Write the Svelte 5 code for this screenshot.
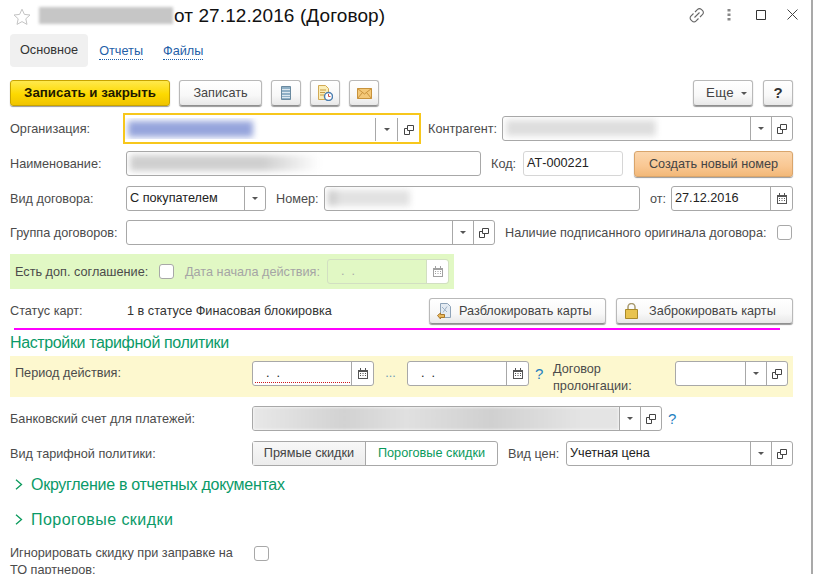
<script>
  // small helpers for the 1C style form
</script>

{#snippet arrow()}
  <span class="btn-cell"><svg width="6" height="3" viewBox="0 0 6 3"><path d="M0 0h6L3 3z" fill="#555" /></svg></span>
{/snippet}
{#snippet open()}
  <span class="btn-cell">
    <svg width="10" height="10" viewBox="0 0 10 10" fill="none" stroke="#444">
      <path d="M3.500 .5h6v5h-6z" /><path d="M3.500 3.500H.5v6h5V5.500" />
    </svg>
  </span>
{/snippet}
{#snippet cal(dim)}
  <span class="btn-cell cal" class:dim>
    <svg width="10" height="11" viewBox="0 0 10 11">
      <path d="M0 2h10v9H0z" fill="#555" />
      <path d="M1 4h8v6H1z" fill="#fff" />
      <path d="M2 0h1v3H2zM7 0h1v3H7z" fill="#555" />
      <path d="M2 5h1v1H2zM4.500 5h1v1h-1zM7 5h1v1H7zM2 7h1v1H2zM4.500 7h1v1h-1zM7 7h1v1H7z" fill="#555" />
    </svg>
  </span>
{/snippet}

<div class="win">
  <header class="title">
    <svg class="star" width="18" height="17" viewBox="0 0 18 17" fill="none" stroke="#c4c4c4">
      <path d="M9 1.200l2.400 5.200 5.600.6-4.200 3.800 1.200 5.600L9 13.600l-5 2.800 1.200-5.600L1 7l5.600-.6z" />
    </svg>
    <div class="blur-title"></div>
    <h1>от 27.12.2016 (Договор)</h1>
    <div class="win-tools">
      <svg class="t-link" width="16" height="16" viewBox="0 0 16 16" fill="none" stroke="#666" stroke-width="1.100">
        <path d="M6.500 4.500l2.600-2.600a2.600 2.600 0 0 1 3.700 0l1.300 1.300a2.600 2.600 0 0 1 0 3.700L11.500 9.500" transform="translate(-.5 .5)" />
        <path d="M9.500 11.500l-2.600 2.600a2.600 2.600 0 0 1-3.700 0L1.900 12.800a2.600 2.600 0 0 1 0-3.700L4.500 6.500" />
        <path d="M5.500 10.500l5-5" />
      </svg>
      <svg class="t-dots" width="4" height="12" viewBox="0 0 4 12"><path d="M.5 0h3v2.500h-3zM.5 4.500h3V7h-3zM.5 9h3v2.500h-3z" fill="#888" /></svg>
      <svg class="t-max" width="10" height="10" viewBox="0 0 10 10" fill="none" stroke="#333"><path d="M.5 .5h9v9h-9z" /></svg>
      <svg class="t-close" width="11" height="11" viewBox="0 0 11 11" fill="none" stroke="#444"><path d="M.5 .5l10 10M10.500 .5l-10 10" /></svg>
    </div>
  </header>

  <nav class="tabs">
    <span class="tab active">Основное</span>
    <span class="tab">Отчеты</span>
    <span class="tab">Файлы</span>
  </nav>

  <div class="toolbar">
    <button class="b primary">Записать и закрыть</button>
    <button class="b save">Записать</button>
    <button class="b ico">
      <svg width="10" height="14" viewBox="0 0 10 14">
        <path d="M.5 .5h9v13h-9z" fill="#8fb0c6" stroke="#6a8aa0" />
        <path d="M1 3.500h8M1 6.500h8M1 9.500h8M1 11.500h8" stroke="#dce8f0" />
      </svg>
    </button>
    <button class="b ico">
      <svg width="16" height="16" viewBox="0 0 16 16">
        <path d="M1.500 .5h7l3 3v11h-10z" fill="#fbeeb8" stroke="#d2aa55" />
        <path d="M3 5h6M3 7.500h5M3 10h4" stroke="#c59a45" />
        <circle cx="11.500" cy="11.500" r="4" fill="#fff" stroke="#4d7fb0" stroke-width="1.500" />
        <path d="M11.500 9v2.500h2" stroke="#c8504a" fill="none" />
      </svg>
    </button>
    <button class="b ico">
      <svg width="15" height="11" viewBox="0 0 15 11">
        <path d="M.5 .5h14v10H.5z" fill="#f3c878" stroke="#c8933c" />
        <path d="M.5 .5l7 5.500 7-5.500M.5 10.500l5-6M14.500 10.500l-5-6" fill="none" stroke="#c8933c" />
      </svg>
    </button>
    <span class="spacer"></span>
    <button class="b more">Еще <svg width="6" height="3" viewBox="0 0 6 3"><path d="M0 0h6L3 3z" fill="#555" /></svg></button>
    <button class="b help">?</button>
  </div>

  <div class="row r-org">
    <span class="lab l-org">Организация:</span>
    <div class="focus">
      <div class="val"><div class="smear s-org"></div></div>
      {@render arrow()}
      {@render open()}
    </div>
    <span class="lab l-contr">Контрагент:</span>
    <div class="f f-contr">
      <div class="val"><div class="smear s-contr"></div></div>
      {@render arrow()}
      {@render open()}
    </div>
  </div>

  <div class="row r-name">
    <span class="lab l-main">Наименование:</span>
    <div class="f f-name"><div class="val"><div class="smear s-name"></div></div></div>
    <span class="lab l-code">Код:</span>
    <div class="f f-code"><div class="val">АТ-000221</div></div>
    <button class="b orange">Создать новый номер</button>
  </div>

  <div class="row r-std">
    <span class="lab l-main">Вид договора:</span>
    <div class="f f-kind">
      <div class="val">С покупателем</div>
      {@render arrow()}
    </div>
    <span class="lab l-num">Номер:</span>
    <div class="f f-num"><div class="val"><div class="smear s-num"></div></div></div>
    <span class="lab l-from">от:</span>
    <div class="f f-date">
      <div class="val">27.12.2016</div>
      {@render cal(false)}
    </div>
  </div>

  <div class="row r-std">
    <span class="lab l-main">Группа договоров:</span>
    <div class="f f-group">
      <div class="val"></div>
      {@render arrow()}
      {@render open()}
    </div>
    <span class="lab l-orig">Наличие подписанного оригинала договора:</span>
    <span class="chk"></span>
  </div>

  <div class="green">
    <span class="lab l-extra">Есть доп. соглашение:</span>
    <span class="chk c-extra"></span>
    <span class="lab gray">Дата начала действия:</span>
    <div class="f f-date off">
      <div class="val mask">. &nbsp;.</div>
      {@render cal(true)}
    </div>
  </div>

  <div class="row r-status">
    <span class="lab l-main">Статус карт:</span>
    <span class="status">1 в статусе Финасовая блокировка</span>
    <button class="b card c-unlock">
      <svg width="14" height="16" viewBox="0 0 14 16">
        <path d="M3.500 .5h7l3 3v11h-10z" fill="#e4ebf2" stroke="#8ea3b8" />
        <path d="M5 4l5 5M10 3.500l-4 6" stroke="#9fb2c6" />
        <path d="M.5 12.500l3-2.500v1.500h4v3h-4V16z" fill="#e9b95c" stroke="#a9772a" />
      </svg>
      Разблокировать карты
    </button>
    <button class="b card c-lock">
      <svg width="13" height="16" viewBox="0 0 13 16">
        <path d="M3 7V4a3.500 3.500 0 0 1 7 0v3" fill="none" stroke="#a89a70" stroke-width="1.500" />
        <path d="M.5 6.500h12v9H.5z" fill="#e8c34f" stroke="#a98a2a" />
      </svg>
      Заброкировать карты
    </button>
  </div>

  <div class="rule"></div>

  <h2 class="sect">Настройки тарифной политики</h2>

  <div class="yellow">
    <span class="lab l-period">Период действия:</span>
    <div class="f f-date">
      <div class="val mask req">. &nbsp;.</div>
      {@render cal(false)}
    </div>
    <span class="dots">...</span>
    <div class="f f-date">
      <div class="val mask">. &nbsp;.</div>
      {@render cal(false)}
    </div>
    <span class="q q-period">?</span>
    <span class="lab l-prol">Договор пролонгации:</span>
    <div class="f f-prol">
      <div class="val"></div>
      {@render arrow()}
      {@render open()}
    </div>
  </div>

  <div class="row r-bank">
    <span class="lab l-wide">Банковский счет для платежей:</span>
    <div class="f f-bank">
      <div class="val bare"><div class="smear s-bank"></div></div>
      {@render arrow()}
      {@render open()}
    </div>
    <span class="q q-bank">?</span>
  </div>

  <div class="row r-tarif">
    <span class="lab l-wide">Вид тарифной политики:</span>
    <div class="toggle">
      <span class="opt on">Прямые скидки</span>
      <span class="opt">Пороговые скидки</span>
    </div>
    <span class="lab l-price">Вид цен:</span>
    <div class="f f-price">
      <div class="val">Учетная цена</div>
      {@render arrow()}
      {@render open()}
    </div>
  </div>

  <div class="coll c-round">
    <svg width="8" height="11" viewBox="0 0 8 11" fill="none" stroke="#0a9a5c" stroke-width="1.300"><path d="M1 .8l5.500 4.700L1 10.200" /></svg>
    <span>Округление в отчетных документах</span>
  </div>
  <div class="coll c-thresh">
    <svg width="8" height="11" viewBox="0 0 8 11" fill="none" stroke="#0a9a5c" stroke-width="1.300"><path d="M1 .8l5.500 4.700L1 10.200" /></svg>
    <span>Пороговые скидки</span>
  </div>

  <div class="row r-ign">
    <span class="lab l-ign">Игнорировать скидку при заправке на ТО партнеров:</span>
    <span class="chk"></span>
  </div>
</div>

<style>
  :global(body) {
    margin: 0;
    background: #fff;
  }
  .win {
    box-sizing: border-box;
    width: 813px;
    height: 574px;
    overflow: hidden;
    border-right: 2px solid #a9a9a9;
    font: 12.7px/16px "Liberation Sans", Arial, sans-serif;
    color: #4b4b4b;
  }
  .title {
    display: flex;
    align-items: center;
    height: 32px;
    padding-left: 13px;
  }
  .star {
    flex: none;
  }
  .blur-title {
    width: 134px;
    height: 17px;
    margin: 0 1px 2px 8px;
    background: #c6c6c6;
    filter: blur(1.500px);
  }
  h1 {
    margin: 0;
    font-size: 19px;
    font-weight: 400;
    letter-spacing: 0.1px;
    color: #111;
  }
  .win-tools {
    display: flex;
    align-items: center;
    margin: 0 0 3px auto;
    padding-right: 13px;
  }
  .t-dots {
    margin-left: 22px;
  }
  .t-max {
    margin-left: 25px;
  }
  .t-close {
    margin-left: 21px;
  }
  .tabs {
    display: flex;
    height: 33px;
    margin: 2px 0 0 10px;
  }
  .tab {
    padding: 0 10px;
    line-height: 33px;
    color: #1f5fa8;
  }
  .tab + .tab {
    line-height: 16px;
    height: 16px;
    margin: 9px 20px 0 0;
    padding: 0;
    border-bottom: 1px dotted #1f5fa8;
  }
  .tab.active + .tab {
    margin-left: 11px;
  }
  .active {
    background: #f0f0f0;
    border-radius: 4px;
    color: #333;
  }
  .toolbar {
    display: flex;
    gap: 9px;
    margin: 13px 18px 0 10px;
  }
  .b {
    box-sizing: border-box;
    flex: none;
    height: 26px;
    padding: 0;
    font: inherit;
    color: #444;
    border: 1px solid #b9b9b9;
    border-bottom-color: #8f8f8f;
    border-radius: 3px;
    background: linear-gradient(#fff, #f8f8f8 60%, #e8e8e8);
    box-shadow: 0 1px 1px #999;
  }
  .primary {
    width: 160px;
    font-size: 13.300px;
    font-weight: 700;
    color: #1e1a00;
    border-color: #c8a400;
    background: linear-gradient(#ffe94d, #fdd900 55%, #f0c400);
  }
  .save {
    width: 83px;
  }
  .ico {
    display: flex;
    align-items: center;
    justify-content: center;
    width: 30px;
  }
  .spacer {
    flex: 1;
  }
  .more {
    width: 60px;
    margin-right: 1px;
    padding-left: 7px;
    font-size: 13.300px;
    letter-spacing: 0.3px;
  }
  .more svg {
    margin: 0 0 2px 3px;
  }
  .help {
    width: 30px;
    font-size: 15px;
    font-weight: 700;
    color: #333;
  }
  .row {
    display: flex;
    align-items: center;
    height: 25px;
    margin: 9px 20px 0 10px;
  }
  .r-org {
    height: 31px;
    margin-top: 7px;
  }
  .r-name {
    margin-top: 7px;
  }
  .r-std + .r-std {
    margin-top: 9px;
  }
  .r-name + .r-std {
    margin-top: 10px;
  }
  .r-status {
    height: 26px;
  }
  .r-tarif {
    margin-top: 10px;
  }
  .r-ign {
    align-items: flex-start;
    height: 40px;
    margin-top: 9px;
  }
  .lab {
    flex: none;
    white-space: nowrap;
  }
  .l-org {
    width: 113px;
  }
  .l-main {
    width: 116px;
  }
  .l-wide {
    width: 242px;
  }
  .l-contr {
    width: 74px;
    margin-left: 7px;
  }
  .l-code {
    width: 32px;
    margin-left: 10px;
  }
  .l-num {
    width: 48px;
    margin-left: 10px;
  }
  .l-from {
    width: 21px;
    margin-left: 10px;
  }
  .l-orig {
    width: 272px;
    margin-left: 10px;
  }
  .l-price {
    width: 58px;
    margin-left: 10px;
  }
  .f,
  .focus {
    box-sizing: border-box;
    display: flex;
    flex: none;
    height: 25px;
    background: #fff;
    border: 1px solid #a8a8a8;
    border-radius: 3px;
    color: #222;
  }
  .focus {
    width: 298px;
    height: 31px;
    padding: 3px 0;
    border: 2px solid #f7c71c;
    border-radius: 0;
  }
  .val {
    flex: 1;
    min-width: 0;
    padding-left: 3px;
    line-height: 23px;
    overflow: hidden;
  }
  .bare {
    padding-left: 0;
  }
  .btn-cell {
    box-sizing: border-box;
    display: flex;
    flex: none;
    align-items: center;
    justify-content: center;
    width: 21px;
    border-left: 1px solid #a8a8a8;
  }
  .focus .btn-cell {
    width: 22px;
    height: 23px;
  }
  .cal {
    width: 22px;
  }
  .dim svg {
    opacity: 0.55;
  }
  .f-contr {
    width: 291px;
  }
  .f-name {
    width: 355px;
  }
  .f-code {
    width: 100px;
    border-color: #d6d6d6;
  }
  .orange {
    width: 159px;
    margin-left: 11px;
    border-color: #d9a56c;
    background: linear-gradient(#fbd6ad, #f9c792 60%, #f2b878);
  }
  .f-kind {
    width: 140px;
  }
  .f-num {
    width: 316px;
  }
  .f-date {
    width: 122px;
  }
  .f-group {
    width: 369px;
  }
  .chk {
    box-sizing: border-box;
    flex: none;
    width: 15px;
    height: 15px;
    background: #fff;
    border: 1px solid #a8a8a8;
    border-radius: 3px;
  }
  .green {
    display: flex;
    align-items: center;
    box-sizing: border-box;
    width: 444px;
    height: 35px;
    margin: 9px 0 0 10px;
    padding-left: 5px;
    background: #e1f8c4;
  }
  .l-extra {
    width: 144px;
  }
  .c-extra {
    margin-right: 11px;
  }
  .gray {
    width: 142px;
    color: #a5a5a5;
  }
  .off {
    background: #e1f8c4;
    border-color: #d2dfc2;
    color: #aaa;
  }
  .off .btn-cell {
    background: #fff;
    border-color: #d2dfc2;
    border-radius: 0 3px 3px 0;
  }
  .mask {
    padding-left: 13px;
  }
  .status {
    width: 302px;
    flex: none;
    margin-left: 1px;
    color: #333;
  }
  .card {
    display: flex;
    align-items: center;
    width: 177px;
    padding-left: 7px;
  }
  .card svg {
    margin-right: 8px;
  }
  .c-lock {
    margin-left: 10px;
    padding-left: 8px;
  }
  .c-lock svg {
    margin-right: 11px;
  }
  .rule {
    width: 766px;
    height: 2px;
    margin: 4px 0 0 14px;
    background: #f0f;
  }
  .sect {
    height: 26px;
    margin: 0 0 0 10px;
    font-size: 16px;
    font-weight: 400;
    line-height: 26px;
    letter-spacing: -0.37px;
    color: #0a9a68;
  }
  .yellow {
    display: flex;
    align-items: flex-start;
    box-sizing: border-box;
    width: 783px;
    height: 41px;
    margin-left: 10px;
    padding: 5px 5px 0;
    background: #fdf8cf;
  }
  .l-period {
    width: 237px;
    line-height: 25px;
  }
  .dots {
    width: 33px;
    line-height: 25px;
    text-align: center;
    color: #6a9ab8;
  }
  .req {
    position: relative;
  }
  .req::after {
    content: "";
    position: absolute;
    left: 2px;
    right: 1px;
    bottom: 2px;
    border-bottom: 1px dotted #d01818;
  }
  .q {
    font-size: 15px;
    line-height: 25px;
    color: #1f7fc0;
  }
  .q-period {
    width: 18px;
    margin-left: 6px;
  }
  .q-bank {
    margin-left: 6px;
  }
  .l-prol {
    width: 122px;
    line-height: 17px;
    white-space: normal;
  }
  .f-prol {
    width: 113px;
  }
  .f-bank {
    width: 410px;
  }
  .toggle {
    box-sizing: border-box;
    display: flex;
    flex: none;
    width: 246px;
    height: 25px;
    border: 1px solid #a8a8a8;
    border-radius: 3px;
    line-height: 23px;
    text-align: center;
  }
  .opt {
    flex: 1;
    color: #0a9a5c;
  }
  .on {
    flex: none;
    width: 112px;
    color: #444;
    border-right: 1px solid #a8a8a8;
    background: linear-gradient(#f8f8f8, #ececec);
  }
  .f-price {
    width: 227px;
  }
  .coll {
    display: flex;
    align-items: center;
    height: 35px;
    margin-left: 15px;
    font-size: 16px;
    color: #0a9a68;
  }
  .coll svg {
    margin-right: 8px;
  }
  .c-round {
    margin-top: 1px;
    letter-spacing: -0.28px;
  }
  .c-thresh {
    letter-spacing: 0.45px;
  }
  .l-ign {
    width: 235px;
    margin: -1px 9px 0 0;
    line-height: 17px;
    white-space: normal;
  }
  .smear {
    height: 16px;
    margin-top: 3px;
    filter: blur(3px);
  }
  .s-org {
    width: 125px;
    background: #96a5dc;
  }
  .s-contr {
    width: 150px;
    background: #dedede;
  }
  .s-name {
    width: 190px;
    background: linear-gradient(90deg, #cfcfcf 70%, #fff);
  }
  .s-num {
    width: 82px;
    background: linear-gradient(90deg, #c4c4c4, #e2e2e2 15%);
  }
  .s-bank {
    width: 366px;
    height: 23px;
    margin: 0;
    background: linear-gradient(90deg, #e8e8e8, #d2d2d2 25%, #e0e0e0 42%, #d0d0d0 65%, #e4e4e4 90%);
    filter: blur(1.500px);
  }
</style>
